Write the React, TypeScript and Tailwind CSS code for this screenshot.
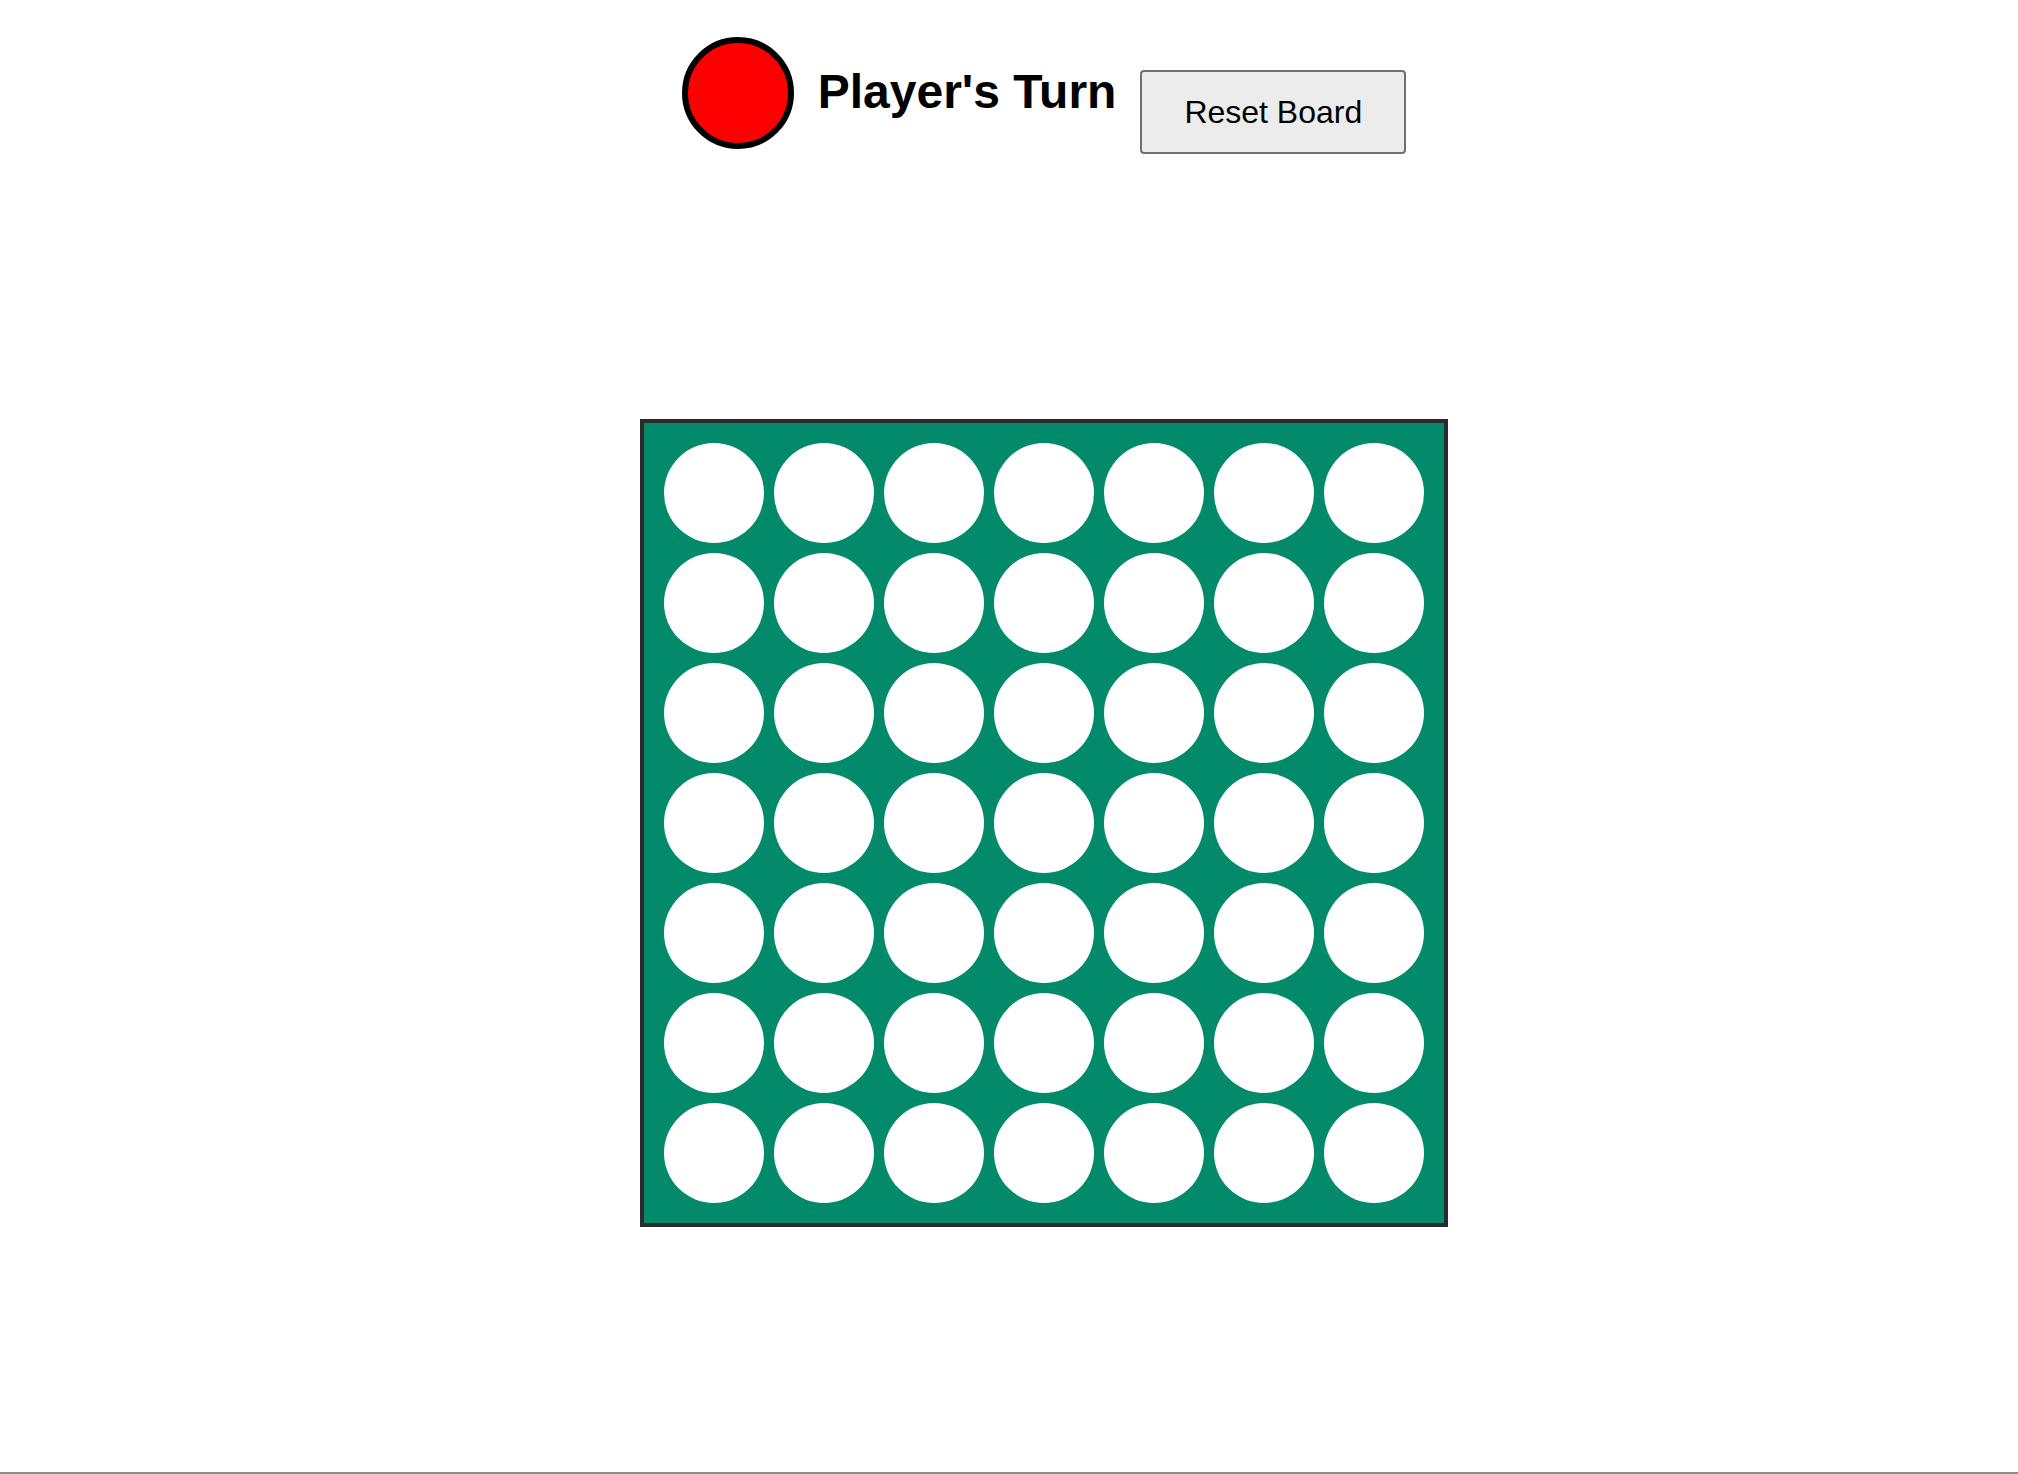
import React from "react";

export default function App() {
  const rows = 7;
  const cols = 7;
  const cells = Array.from({ length: rows * cols }, (_, i) => i);
  return (
    <div
      className="w-full h-[1474px] bg-white border-b-2 border-[#8c8c8c] flex flex-col items-center pl-[70px]"
      style={{ fontFamily: '"Liberation Sans", Arial, sans-serif' }}
    >
      <div className="flex items-start">
        <div className="mt-[37px] w-[112px] h-[112px] rounded-full border-[6px] border-black bg-[#ff0000]" />
        <h1 className="mt-[65px] ml-[24px] text-[48px] leading-[53px] font-bold text-black">
          Player&apos;s Turn
        </h1>
        <button className="mt-[70px] ml-[24px] border-2 border-[#707070] rounded-[4px] bg-[#ececec] px-[42px] py-[21px] text-[32px] leading-[38px] text-black">
          Reset Board
        </button>
      </div>
      <div className="mt-[265px] border-4 border-[#2a2a2a] bg-[#028a6b] p-[20px] grid grid-cols-7 gap-[10px]">
        {cells.map((i) => (
          <div key={i} className="w-[100px] h-[100px] rounded-full bg-white" />
        ))}
      </div>
    </div>
  );
}
